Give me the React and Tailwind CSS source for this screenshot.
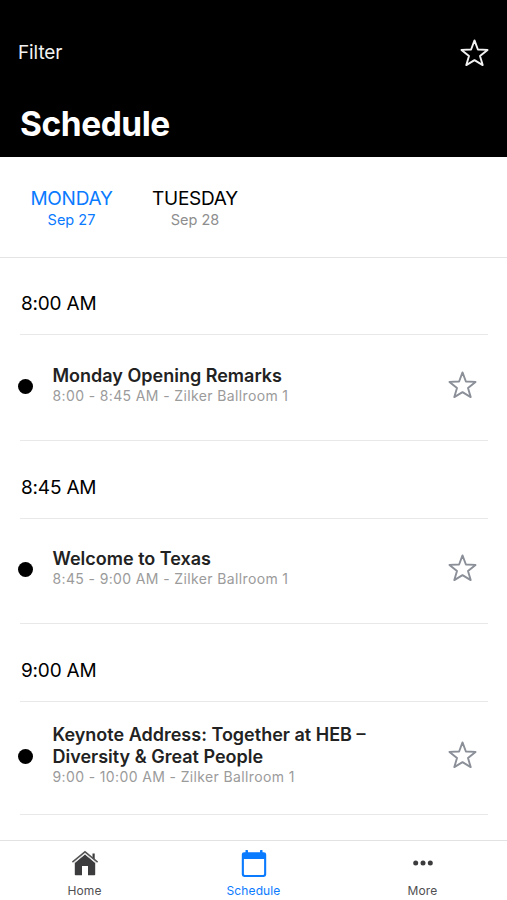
import React from "react";

const sessions = [
  {
    time: "8:00 AM",
    title: ["Monday Opening Remarks"],
    detail: "8:00 - 8:45 AM - Zilker Ballroom 1",
    head: "h-[77px] pt-[32px]",
    row: "h-[106px]",
    text: "pt-[30px]",
    mark: "pt-[44px]",
    star: "pt-[36px]",
  },
  {
    time: "8:45 AM",
    title: ["Welcome to Texas"],
    detail: "8:45 - 9:00 AM - Zilker Ballroom 1",
    head: "h-[78px] pt-[33px]",
    row: "h-[105px]",
    text: "pt-[29px]",
    mark: "pt-[43px]",
    star: "pt-[35px]",
  },
  {
    time: "9:00 AM",
    title: ["Keynote Address: Together at HEB –", "Diversity & Great People"],
    detail: "9:00 - 10:00 AM - Zilker Ballroom 1",
    head: "h-[78px] pt-[33px]",
    row: "h-[113px]",
    text: "pt-[22px]",
    mark: "pt-[47px]",
    star: "pt-[39px]",
  },
];

function Star({ className }) {
  return (
    <svg
      viewBox="0 0 29 28"
      className={`h-[28px] w-[29px] ${className}`}
      fill="none"
      stroke="currentColor"
      strokeLinejoin="round"
      strokeWidth="1.9"
    >
      <path d="M14.5 1.4 17.9 10.500 27.500 10.900 20 17.100 22.700 26.100 14.500 21.100 6.300 26.100 9 17.100 1.500 10.900 11.100 10.500Z" />
    </svg>
  );
}

function HomeIcon() {
  return (
    <svg viewBox="0 0 28 26" className="h-[26px] w-[28px]">
      <path d="M21.500 3.500h2.200v7l-2.200-2.300z" fill="#3c3c3e" />
      <path d="M14 4.500 24.200 13v11.400a.8.8 0 0 1-.8.8H17v-9.200h-6v9.200H4.600a.8.8 0 0 1-.8-.8V13z" fill="#3c3c3e" />
      <path d="M1.400 12.200 14 1.800l12.600 10.400" fill="none" stroke="#555557" strokeWidth="1.500" />
      <path d="M2.800 13.100 14 3.800l11.200 9.300" fill="none" stroke="#d8d8d8" strokeWidth=".7" />
    </svg>
  );
}

function CalendarIcon() {
  return (
    <svg viewBox="0 0 26 28" className="h-[28px] w-[26px]" fill="#0a7aff">
      <rect x="4.500" y="0" width="2.500" height="5" rx=".6" />
      <rect x="19" y="0" width="2.500" height="5" rx=".6" />
      <path
        fillRule="evenodd"
        d="M3.200 2.200h19.600a2.400 2.400 0 0 1 2.400 2.400v20a2.400 2.400 0 0 1-2.400 2.400H3.200A2.400 2.400 0 0 1 .8 24.600V4.600a2.400 2.400 0 0 1 2.400-2.400zM2.900 8.900v15.200a.8.8 0 0 0 .8.8h18.600a.8.8 0 0 0 .8-.8V8.900z"
      />
    </svg>
  );
}

function MoreIcon() {
  return (
    <svg viewBox="0 0 20 6" className="h-[6px] w-[20px]" fill="#3c3c3e">
      <circle cx="2.700" cy="3" r="2.500" />
      <circle cx="10" cy="3" r="2.500" />
      <circle cx="17.300" cy="3" r="2.500" />
    </svg>
  );
}

export default function App() {
  return (
    <div className="flex h-[900px] w-[507px] flex-col overflow-hidden bg-white font-['Inter','Liberation_Sans',sans-serif] text-black">
      <header className="flex h-[157px] shrink-0 flex-col bg-black text-white">
        <div className="flex h-[67px] items-start justify-between pr-[18px] pl-[18px] pt-[39px]">
          <span className="pt-px text-[19px] leading-[26px] tracking-[-0.1px] text-[#f2f2f2]">Filter</span>
          <Star className="text-[#f2f2f2]" />
        </div>
        <h1 className="pt-[37px] pl-[20px] text-[33.5px] leading-[41px] font-bold tracking-[-0.45px]">Schedule</h1>
      </header>

      <div className="flex h-[101px] shrink-0 gap-[39px] border-b border-[#e4e4e6] pt-[31px] pl-[30px] text-center">
        <div className="w-[83px] text-[#0a7aff]">
          <div className="text-[19px] leading-[22px] tracking-[-0.25px] whitespace-nowrap">MONDAY</div>
          <div className="text-[14.5px] leading-[19px] whitespace-nowrap">Sep 27</div>
        </div>
        <div className="w-[86px]">
          <div className="text-[19px] leading-[22px] tracking-[-0.25px] whitespace-nowrap">TUESDAY</div>
          <div className="text-[14.5px] leading-[19px] whitespace-nowrap text-[#8e8e8e]">Sep 28</div>
        </div>
      </div>

      <main className="flex-1 pr-[19px] pl-[20px]">
        {sessions.map((s) => (
          <section key={s.time}>
            <h2 className={`${s.head} border-b border-[#e8e8e8] pl-[1px] text-[19px] leading-[27px] tracking-[-0.2px]`}>
              {s.time}
            </h2>
            <div className={`${s.row} flex border-b border-[#e8e8e8]`}>
              <div className={`${s.mark} -ml-[2px] w-[34.500px]`}>
                <div className="size-[15px] rounded-full bg-black" />
              </div>
              <div className={`${s.text} flex-1 whitespace-nowrap`}>
                {s.title.map((line) => (
                  <div key={line} className="text-[18px] leading-[22px] font-semibold text-[#222]">
                    {line}
                  </div>
                ))}
                <div className="text-[14px] leading-[18px] tracking-[0.37px] text-[#9b9b9b]">{s.detail}</div>
              </div>
              <div className={`${s.star} pr-[11px]`}>
                <Star className="text-[#8b8f98]" />
              </div>
            </div>
          </section>
        ))}
      </main>

      <nav className="grid h-[60px] shrink-0 grid-cols-3 border-t border-[#e2e2e4] text-center text-[12px] leading-[16px] tracking-[0.12px] text-[#505052]">
        <div className="flex flex-col items-center">
          <div className="flex h-[42px] items-start pt-[9px]"><HomeIcon /></div>
          <span>Home</span>
        </div>
        <div className="flex flex-col items-center text-[#0a7aff]">
          <div className="flex h-[42px] items-start pt-[9px]"><CalendarIcon /></div>
          <span>Schedule</span>
        </div>
        <div className="flex flex-col items-center">
          <div className="flex h-[42px] items-start pt-[19px]"><MoreIcon /></div>
          <span>More</span>
        </div>
      </nav>
    </div>
  );
}
